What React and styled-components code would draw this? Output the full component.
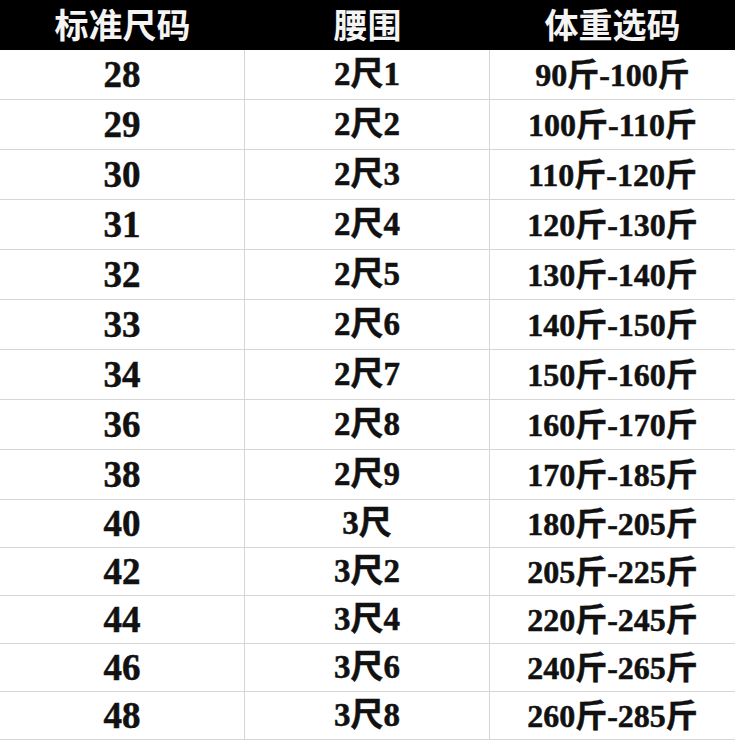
import React from "react";
import styled, { createGlobalStyle } from "styled-components";

const rows = [
  ["28", "2尺1", "90斤-100斤"],
  ["29", "2尺2", "100斤-110斤"],
  ["30", "2尺3", "110斤-120斤"],
  ["31", "2尺4", "120斤-130斤"],
  ["32", "2尺5", "130斤-140斤"],
  ["33", "2尺6", "140斤-150斤"],
  ["34", "2尺7", "150斤-160斤"],
  ["36", "2尺8", "160斤-170斤"],
  ["38", "2尺9", "170斤-185斤"],
  ["40", "3尺", "180斤-205斤"],
  ["42", "3尺2", "205斤-225斤"],
  ["44", "3尺4", "220斤-245斤"],
  ["46", "3尺6", "240斤-265斤"],
  ["48", "3尺8", "260斤-285斤"],
];

const sizes = [37, 33, 32];

const App = () => {
  return (
    <>
      <GlobalStyle />
      <Table>
        <HeaderCell>标准尺码</HeaderCell>
        <HeaderCell>腰围</HeaderCell>
        <HeaderCell>体重选码</HeaderCell>
        {rows.map((row, index) =>
          row.map((value, col) => (
            <Cell key={`${index}-${col}`} fontSize={sizes[col]} last={col === 2}>
              {value}
            </Cell>
          ))
        )}
      </Table>
    </>
  );
};

const GlobalStyle = createGlobalStyle`
  html, body {
    margin: 0;
    padding: 0;
    background: #ffffff;
  }
`;

const Table = styled.div`
  display: grid;
  grid-template-columns: 245px 245px 245px;
  grid-template-rows: 50px repeat(9, 50px) repeat(5, 48px);
  width: 735px;
  background: #ffffff;
`;

const HeaderCell = styled.div`
  display: flex;
  align-items: center;
  justify-content: center;
  box-sizing: border-box;
  padding-bottom: 2px;
  background: #000000;
  color: #f4f4f4;
  font-family: "Noto Sans CJK SC", "Noto Sans", sans-serif;
  font-size: 34px;
  font-weight: 700;
  line-height: 1;
`;

const Cell = styled.div`
  display: flex;
  align-items: center;
  justify-content: center;
  box-sizing: border-box;
  border-bottom: 1px solid #d6d6d6;
  border-right: ${(props) => (props.last ? "none" : "1px solid #d6d6d6")};
  color: #111111;
  font-family: "Liberation Serif", "Noto Sans CJK SC", serif;
  font-size: ${(props) => props.fontSize}px;
  font-weight: 700;
  line-height: 1;
  -webkit-text-stroke: 0.5px #111111;
`;

export default App;
